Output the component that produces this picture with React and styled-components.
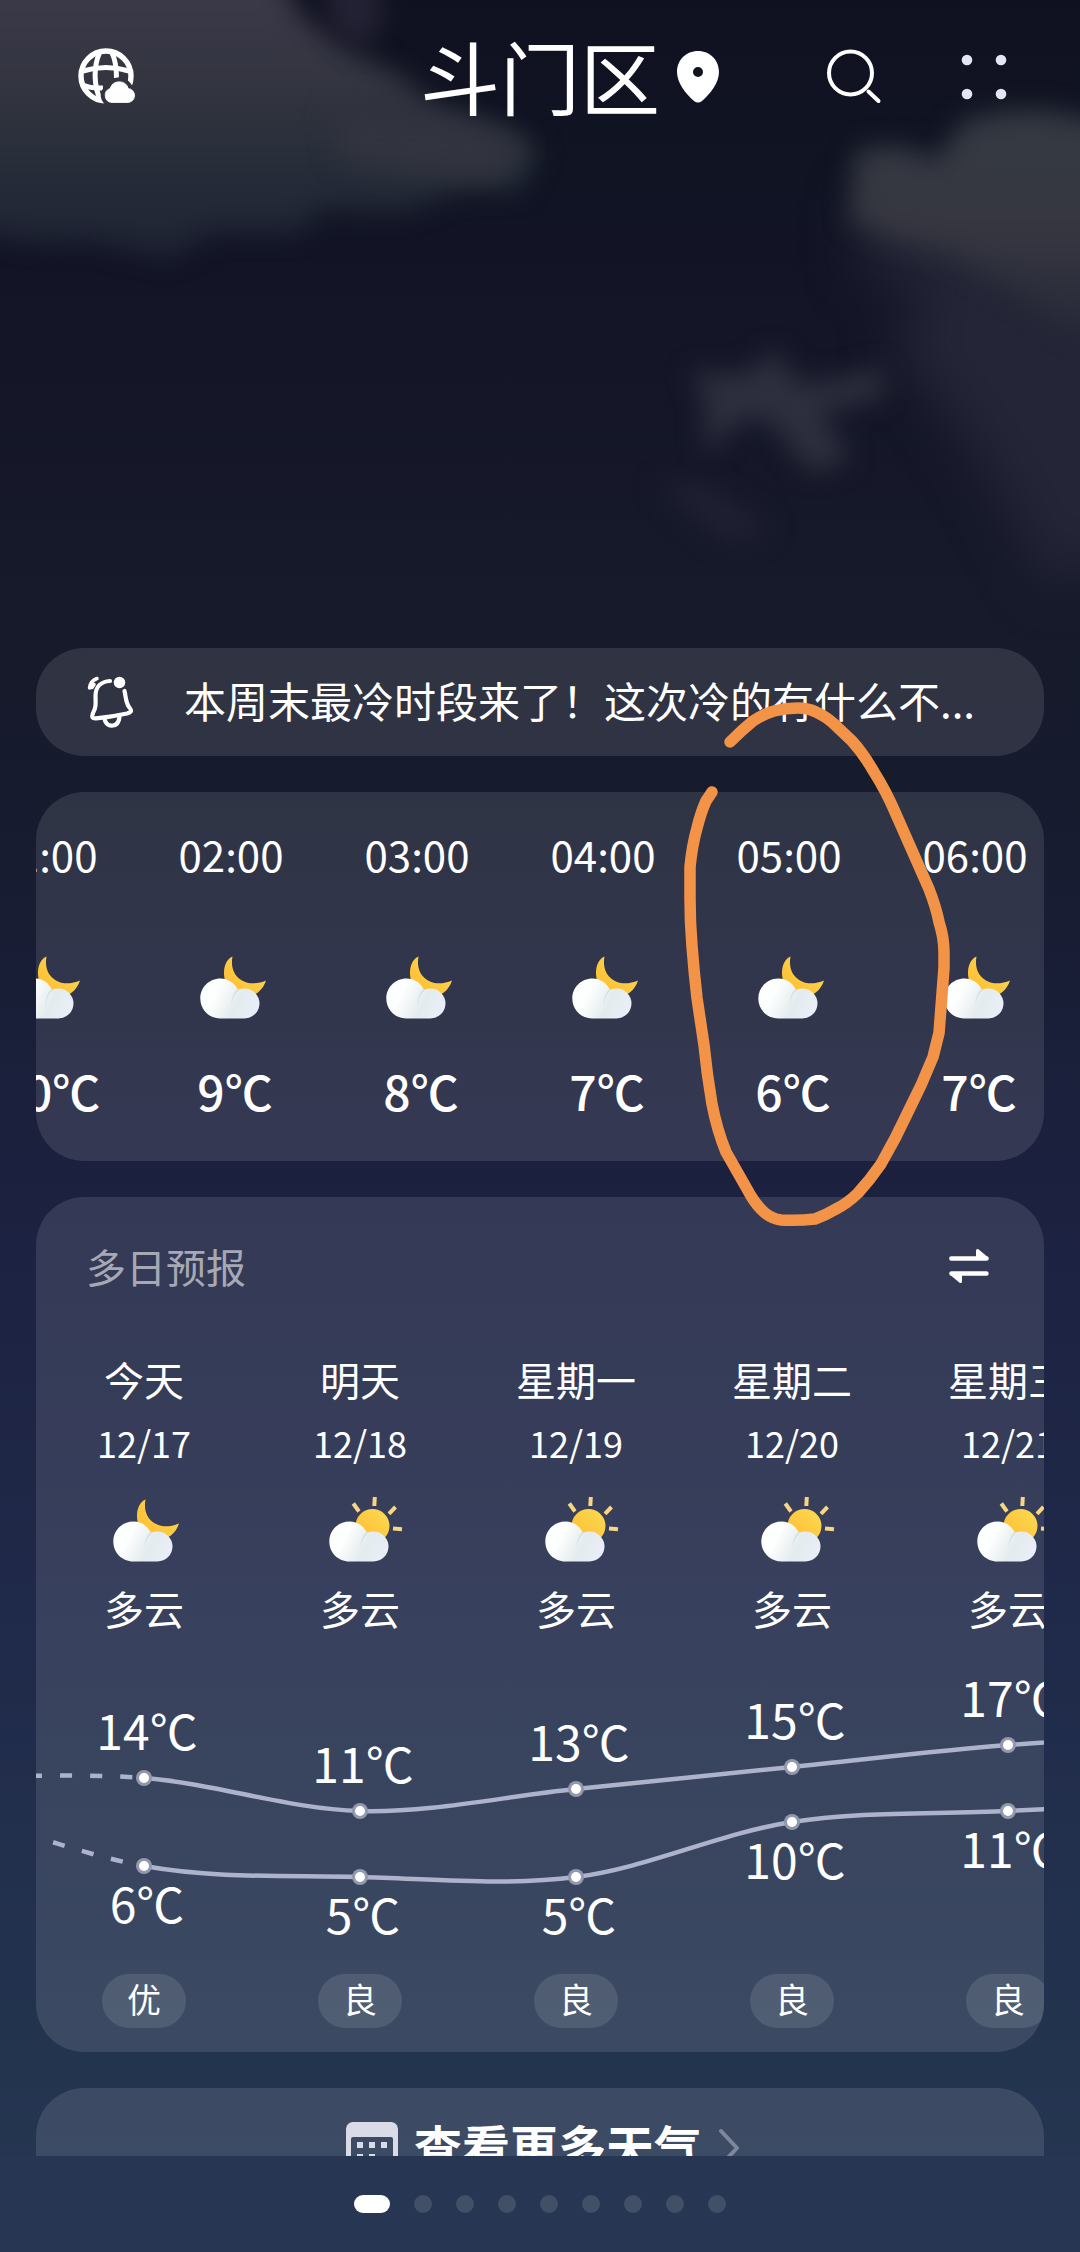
import { useId } from "react"
import styled, { createGlobalStyle } from "styled-components"

const theme = {
    font: `"Noto Sans CJK SC", "Noto Sans", sans-serif`,
    color: {
        text: "#fff",
        muted: "rgba(255, 255, 255, .58)",
        card: "rgba(255, 255, 255, .11)",
        line: "#adb3cb",
        marker: "#f39348",
        footer: "#273753",
    },
    column: {
        hour: 186,
        day: 216,
    },
}

const GlobalStyle = createGlobalStyle`
    * {
        box-sizing: border-box;
    }

    body {
        margin: 0;
        background: #101120;
        color: ${ theme.color.text };
        font-family: ${ theme.font };
    }

    h1, h2, p {
        margin: 0;
        font-weight: 400;
    }
`

/* ---------- data ---------- */

const hours = [
    { time: "01:00", temp: 10 },
    { time: "02:00", temp: 9 },
    { time: "03:00", temp: 8 },
    { time: "04:00", temp: 7 },
    { time: "05:00", temp: 6 },
    { time: "06:00", temp: 7 },
]

const days = [
    { name: "今天", date: "12/17", sky: "night", text: "多云", high: 14, low: 6, air: "优" },
    { name: "明天", date: "12/18", sky: "day", text: "多云", high: 11, low: 5, air: "良" },
    { name: "星期一", date: "12/19", sky: "day", text: "多云", high: 13, low: 5, air: "良" },
    { name: "星期二", date: "12/20", sky: "day", text: "多云", high: 15, low: 10, air: "良" },
    { name: "星期三", date: "12/21", sky: "day", text: "多云", high: 17, low: 11, air: "良" },
]

// neighbours outside the visible range, they only shape the curves
const before = { high: 14, low: 12 }
const after = { high: 18, low: 12 }

const cities = ["斗门区", "2", "3", "4", "5", "6", "7", "8", "9"]

/* ---------- layout ---------- */

const Page = styled.div`
    position: relative;
    display: flex;
    flex-direction: column;
    height: 100vh;
    overflow: hidden;
    background: linear-gradient(#101120 0%, #101423 7%, #141527 14%, #161a2a 28%, #161b2e 35%, #1c2140 53%, #202a4a 73%, #23344f 91%, #273753 100%);
`

const Sky = styled.svg`
    position: absolute;
    top: 0;
    left: 0;
    width: 100%;
    pointer-events: none;
`

const Header = styled.header`
    position: relative;
    flex: none;
    display: grid;
    grid-template-columns: 1fr auto 1fr;
    align-items: center;
    height: 152px;
    padding: 0 72px;
`

const HeaderSide = styled.div`
    display: flex;
    align-items: center;
    gap: 78px;
`

const City = styled.h1`
    font-size: 80px;
    line-height: 96px;
    padding-bottom: 4px;
`

const Pin = styled.svg`
    margin-left: 16px;
    margin-right: auto;
`

const IconButton = styled.button`
    display: flex;
    padding: 0;
    border: 0;
    background: none;
    color: inherit;
    cursor: pointer;
`

const Content = styled.main`
    position: relative;
    flex: 1;
    min-height: 0;
    overflow: hidden;
    display: flex;
    flex-direction: column;
    gap: 36px;
    padding: 496px 36px 0;
`

const Card = styled.section`
    flex: none;
    border-radius: 48px;
    background: ${ theme.color.card };
    overflow: hidden;
`

const Notice = styled.a`
    flex: none;
    display: flex;
    align-items: center;
    gap: 50px;
    height: 108px;
    padding: 0 60px 0 50px;
    border-radius: 48px;
    background: ${ theme.color.card };
    color: inherit;
    text-decoration: none;
`

const NoticeText = styled.span`
    padding-bottom: 4px;
    font-size: 42px;
    line-height: 56px;
    white-space: nowrap;
`

/* ---------- hourly ---------- */

const HourCard = styled(Card)`
    padding: 38px 0 41px;
`

const HourStrip = styled.div`
    display: flex;
    margin-left: -84px;
`

const Hour = styled.div`
    flex: 0 0 ${ theme.column.hour }px;
    display: flex;
    flex-direction: column;
    align-items: center;
`

const HourTime = styled.span`
    font-size: 42px;
    line-height: 48px;
    margin-bottom: 73px;
`

const HourTemp = styled.span`
    padding-left: 8px;
    font-size: 48px;
    font-weight: 500;
    line-height: 60px;
    margin-top: 37px;
`

/* ---------- daily ---------- */

const DayCard = styled(Card)`
    padding: 45px 0 24px;
`

const CardHeader = styled.div`
    display: flex;
    align-items: center;
    justify-content: space-between;
    padding: 0 55px 0 50px;
    margin-bottom: 65px;
`

const CardTitle = styled.h2`
    font-size: 40px;
    line-height: 48px;
    color: ${ theme.color.muted };
`

const DayStrip = styled.div`
    display: flex;
`

const Day = styled.div`
    flex: 0 0 ${ theme.column.day }px;
    display: flex;
    flex-direction: column;
    align-items: center;
`

const DayText = styled.span`
    font-size: 40px;
    line-height: 48px;
`

const DayDate = styled.span`
    font-size: 36px;
    line-height: 44px;
    margin: 17px 0 30px;
`

const SkyText = styled(DayText)`
    margin-top: 18px;
`

const ChartSvg = styled.svg`
    display: block;
    font-size: 48px;
`

const Air = styled.span`
    width: 84px;
    height: 54px;
    border-radius: 27px;
    background: ${ theme.color.card };
    font-size: 34px;
    line-height: 50px;
    text-align: center;
`

/* ---------- bottom ---------- */

const MoreLink = styled.a`
    flex: none;
    display: flex;
    align-items: center;
    justify-content: center;
    height: 120px;
    padding-left: 6px;
    border-radius: 48px;
    background: ${ theme.color.card };
    color: inherit;
    font-size: 48px;
    font-weight: 700;
    line-height: 60px;
    text-decoration: none;
`

const MoreText = styled.span`
    margin: 0 16px 6px 16px;
`

const Pager = styled.nav`
    position: relative;
    flex: none;
    display: flex;
    justify-content: center;
    align-items: center;
    gap: 24px;
    height: 96px;
    background: ${ theme.color.footer };
`

const PagerDot = styled.button`
    width: ${ props => props.$active ? 36 : 18 }px;
    height: 18px;
    padding: 0;
    border: 0;
    border-radius: 9px;
    background: ${ props => props.$active ? "#fff" : "rgba(255, 255, 255, .12)" };
`

const Marker = styled.svg`
    position: absolute;
    top: 0;
    left: 0;
    pointer-events: none;
`

/* ---------- icons ---------- */

function GlobeIcon() {
    const cloud = "M33.500 54.500h15.500a7 7 0 0 0 1.200-14a9.400 9.400 0 0 0-18 0A7.200 7.200 0 0 0 33.500 54.500z"

    return (
        <svg width="69" height="57" viewBox="-6 0 69 57" fill="none" aria-hidden="true">
            <mask id="globe-cut">
                <rect x="-6" width="69" height="57" fill="#fff" />
                <path d={cloud} fill="#000" stroke="#000" strokeWidth="9" strokeLinejoin="round" />
            </mask>
            <g mask="url(#globe-cut)" stroke="#fff" strokeWidth="5">
                <circle cx="28" cy="28" r="25" strokeWidth="5.400" />
                <path d="M5 23Q28 16 51 23M5 37Q13 40.500 25 40" />
                <path d="M21.500 5C15.500 18 15.500 38 22.500 52M34 5C37.500 12 38.500 20 38.500 30" />
            </g>
            <path d={cloud} fill="#fff" stroke="#fff" strokeWidth=".8" />
        </svg>
    )
}

function SearchIcon() {
    return (
        <svg width="57" height="57" viewBox="0 0 57 57" fill="none" stroke="#fff" strokeWidth="4" strokeLinecap="round" aria-hidden="true">
            <circle cx="25.500" cy="25" r="21.500" />
            <path d="M43.500 43.500L53.500 53" />
        </svg>
    )
}

function DotsIcon() {
    return (
        <svg width="48" height="48" viewBox="0 0 48 48" fill="#e4e4f2" aria-hidden="true">
            <circle cx="7" cy="8" r="5.300" />
            <circle cx="41" cy="8" r="5.300" />
            <circle cx="7" cy="42" r="5.300" />
            <circle cx="41" cy="42" r="5.300" />
        </svg>
    )
}

function BellIcon() {
    return (
        <svg width="48" height="54" viewBox="0 0 48 54" fill="none" stroke="#fff" strokeWidth="4.200" strokeLinecap="round" strokeLinejoin="round" aria-hidden="true">
            <path d="M24 6C15 6.500 9.500 12 9.500 21C9.800 29 10 33 7 38C5.500 42 6 43.500 10 43.300C20 42.500 32 40.500 41 38.500C46 37 46 35.500 43 32C39.500 27 40 22 38.500 16" />
            <path d="M18.500 44C20 50 24 51 27 50.500C31 50 33 47 33.500 42" />
            <path d="M11 3.500C7 5 4 8.500 3.500 13M8 9.500L6 12.500" strokeWidth="3.500" />
            <circle cx="33.500" cy="7.500" r="5.800" fill="#fff" stroke="none" />
        </svg>
    )
}

function SwapIcon() {
    return (
        <svg width="40" height="36" viewBox="0 0 40 36" fill="#fff" stroke="#fff" strokeLinejoin="round" strokeLinecap="round" aria-hidden="true">
            <path d="M2.300 10.500H37.500M2.500 25.500H37.500" strokeWidth="4.400" />
            <path d="M28.500 2.500L38 10.500H28.500z M11.500 33.500L2 25.500H11.500z" strokeWidth="3" />
        </svg>
    )
}

function CalendarIcon() {
    return (
        <svg width="52" height="52" viewBox="0 0 52 52" fill="#d9dce6" aria-hidden="true">
            <path fillRule="evenodd" d="M7 0H45A7 7 0 0 1 52 7V45A7 7 0 0 1 45 52H7A7 7 0 0 1 0 45V7A7 7 0 0 1 7 0zM5 17V47H47V17A2 2 0 0 0 45 15H7A2 2 0 0 0 5 17z" />
            <path d="M11 20h6v6h-6zM23 20h6v6h-6zM35 20h6v6h-6zM11 32h6v6h-6zM23 32h6v6h-6z" />
        </svg>
    )
}

function WeatherIcon({ sky }) {
    const id = useId()

    return (
        <svg width="96" height="72" viewBox="0 0 96 72" role="img" aria-label="多云">
            <defs>
                <linearGradient id={id + "sun"} x1="0" y1="1" x2="1" y2="0">
                    <stop offset="0" stopColor="#ffb92e" />
                    <stop offset="1" stopColor="#fbdc55" />
                </linearGradient>
                <linearGradient id={id + "cloud"} gradientUnits="userSpaceOnUse" x1="24" y1="38" x2="72" y2="62">
                    <stop offset=".2" stopColor="#fdfefe" />
                    <stop offset=".62" stopColor="#e3ebee" />
                    <stop offset="1" stopColor="#e9eff8" />
                </linearGradient>
                <linearGradient id={id + "fold"} gradientUnits="userSpaceOnUse" x1="56" y1="38" x2="48" y2="58">
                    <stop offset="0" stopColor="#cfdcdf" />
                    <stop offset="1" stopColor="#cfdcdf" stopOpacity="0" />
                </linearGradient>
            </defs>
            {
                sky === "night"
                    ? <path fill={`url(#${id}sun)`} d="M49.500 5.500C47.500 16 51 25 59 29.500C66 33.500 75 33 83 29.500C80 39 72 46 62 46C50 46 41 35 41 22C41 14 44 8 49.500 5.500z" />
                    : <>
                        <circle cx="60.500" cy="32" r="17" fill={`url(#${id}sun)`} />
                        <path stroke="#f7d683" strokeWidth="4" d="M62.800 3L62.300 12M41.300 9.500L47 17.500M83.500 13L77 19.800M81 34.500L90 35.300" />
                    </>
            }
            <path fill={`url(#${id}cloud)`} d="M37.500 27.500C45 27.500 51.500 31.500 55 38.800Q58 37.500 61.500 37.500A15 15 0 0 1 61.500 67.500H37.500C26 67.500 17.300 58.500 17.300 47.500S26 27.500 37.500 27.500z" />
            <path stroke={`url(#${id}fold)`} strokeWidth="1.500" fill="none" d="M55 38.800C51 42 49 47 48.500 54" />
        </svg>
    )
}

/* ---------- temperature chart ---------- */

const chartHeight = 342
const toX = index => theme.column.day / 2 + index * theme.column.day
const toY = temp => 113 + (17 - temp) * 11

function segments(key) {
    const points = [before, ...days, after].map((day, i) => ({ x: toX(i - 1), y: toY(day[key]) }))

    return points.slice(0, -1).map((p, i) => {
        const prev = points[i - 1] || p
        const next = points[i + 1]
        const last = points[i + 2] || next

        return {
            from: p,
            c1: { x: p.x + (next.x - prev.x) / 6, y: p.y + (next.y - prev.y) / 6 },
            c2: { x: next.x - (last.x - p.x) / 6, y: next.y - (last.y - p.y) / 6 },
            to: next,
        }
    })
}

function Curve({ name, dash }) {
    const [past, ...rest] = segments(name)
    const line = rest.map(s => `C${s.c1.x} ${s.c1.y} ${s.c2.x} ${s.c2.y} ${s.to.x} ${s.to.y}`).join("")

    return (
        <g fill="none" stroke={theme.color.line} strokeWidth="4.500">
            <path
                strokeDasharray={dash}
                d={`M${past.to.x} ${past.to.y}C${past.c2.x} ${past.c2.y} ${past.c1.x} ${past.c1.y} ${past.from.x} ${past.from.y}`}
            />
            <path d={`M${rest[0].from.x} ${rest[0].from.y}${line}`} />
            {
                rest.map(s => (
                    <g key={s.from.x} stroke="none">
                        <circle cx={s.from.x} cy={s.from.y} r="8" fill="#9299ae" />
                        <circle cx={s.from.x} cy={s.from.y} r="5" fill="#fff" />
                    </g>
                ))
            }
        </g>
    )
}

function Chart() {
    const width = days.length * theme.column.day

    return (
        <ChartSvg width={width} height={chartHeight} viewBox={`0 0 ${width} ${chartHeight}`}>
            <Curve name="high" dash="0 12 12 18 12 18 12 18 12 18" />
            <Curve name="low" dash="0 22 12 18 12 18 12 100" />
            <g fill="#fff" textAnchor="middle">
                {
                    days.map((day, i) => (
                        <g key={day.date}>
                            <text x={toX(i) + 3} y={toY(day.high) - 28}>{ day.high }℃</text>
                            <text x={toX(i) + 3} y={toY(day.low) + 57}>{ day.low }℃</text>
                        </g>
                    ))
                }
            </g>
        </ChartSvg>
    )
}

/* ---------- sky ---------- */

function NightSky() {
    return (
        <Sky viewBox="0 0 1080 640" aria-hidden="true">
            <defs>
                <filter id="soft" x="-30%" y="-30%" width="160%" height="160%" colorInterpolationFilters="sRGB">
                    <feGaussianBlur stdDeviation="13" />
                </filter>
                <filter id="softer" x="-40%" y="-40%" width="180%" height="180%" colorInterpolationFilters="sRGB">
                    <feGaussianBlur stdDeviation="26" />
                </filter>
                <linearGradient id="left-cloud" gradientUnits="userSpaceOnUse" x1="0" y1="0" x2="0" y2="270">
                    <stop offset="0" stopColor="#3a3948" />
                    <stop offset=".35" stopColor="#32343f" />
                    <stop offset=".6" stopColor="#262d39" />
                    <stop offset="1" stopColor="#1e2233" />
                </linearGradient>
                <linearGradient id="right-cloud" gradientUnits="userSpaceOnUse" x1="0" y1="100" x2="0" y2="340">
                    <stop offset="0" stopColor="#343a43" />
                    <stop offset=".5" stopColor="#363740" />
                    <stop offset="1" stopColor="#272939" />
                </linearGradient>
            </defs>
            <path filter="url(#soft)" fill="url(#left-cloud)" d="M-60-60H265L300 15L350 50L400 75L440 110L500 125L540 150L520 190L460 190L400 212L320 208L300 232L210 232L170 258L90 240L40 242L-60 225z" />
            <path filter="url(#soft)" fill="#32343f" d="M330 110L450 115L525 145L500 178L420 175L340 160z" />
            <path filter="url(#soft)" fill="#242335" d="M325-30H370L385 20L360 50L330 25z" />
            <path filter="url(#softer)" fill="#242536" d="M860 200L1160 180V540L1050 590L985 470L930 390L890 350L930 290L860 270z" />
            <path filter="url(#soft)" fill="url(#right-cloud)" d="M855 150L900 145L935 160L965 120L1000 112L1040 110L1160 130V330L1070 330L1020 295L950 255L880 235L850 220z" />
            <path filter="url(#soft)" fill="#2e2f3e" d="M690 372L745 375L775 350L800 385L860 375L885 365L880 400L820 410L850 460L810 472L770 420L740 420L705 455L705 400z" />
            <path filter="url(#soft)" fill="#1f2032" d="M655 485L700 480L770 525L750 545L720 540z" />
        </Sky>
    )
}

// hand-drawn loop round the coldest hour
function HandMark() {
    return (
        <Marker width="1080" height="1300" viewBox="0 0 1080 1300" fill="none" aria-hidden="true">
            <path
                stroke={theme.color.marker}
                strokeWidth="11.500"
                strokeLinecap="round"
                strokeLinejoin="round"
                d="M730 742Q742 730 753 721Q764 714 774 711Q786 708 798 708Q808 708 816 712Q825 716 833 723L852 741Q863 753 874 772Q886 791 895 812L914 855L929 889Q936 907 939 922Q944 938 944 952V968L939 1033L933 1057Q922 1085 908 1112Q896 1138 881 1164Q870 1180 858 1193Q848 1203 836 1209Q826 1215 815 1219Q798 1221 781 1220Q773 1219 765 1213Q757 1206 751 1196L726 1152Q717 1130 712 1104Q707 1075 704 1045L697 998Q694 972 692 946Q690 922 690 899V867Q692 846 697 828Q701 812 706 801L712 792"
            />
        </Marker>
    )
}

/* ---------- page ---------- */

export default function App() {
    return (
        <Page>
            <GlobalStyle />
            <NightSky />
            <Header>
                <HeaderSide>
                    <IconButton aria-label="全球天气"><GlobeIcon /></IconButton>
                </HeaderSide>
                <City>斗门区</City>
                <HeaderSide>
                    <Pin width="44" height="54" viewBox="0 0 44 54" fill="#fff" aria-hidden="true">
                        <path fillRule="evenodd" d="M22 2C34 2 43 11 43 23C43 34 34 45 26 52Q22 55 18 52C10 45 1 34 1 23C1 11 10 2 22 2zM22 18A5 5 0 1 0 22 28A5 5 0 1 0 22 18z" />
                    </Pin>
                    <IconButton aria-label="搜索"><SearchIcon /></IconButton>
                    <IconButton aria-label="更多"><DotsIcon /></IconButton>
                </HeaderSide>
            </Header>

            <Content>
                <Notice href="#notice">
                    <BellIcon />
                    <NoticeText>本周末最冷时段来了！这次冷的有什么不...</NoticeText>
                </Notice>

                <HourCard>
                    <HourStrip>
                        {
                            hours.map(hour => (
                                <Hour key={hour.time}>
                                    <HourTime>{ hour.time }</HourTime>
                                    <WeatherIcon sky="night" />
                                    <HourTemp>{ hour.temp }℃</HourTemp>
                                </Hour>
                            ))
                        }
                    </HourStrip>
                </HourCard>

                <DayCard>
                    <CardHeader>
                        <CardTitle>多日预报</CardTitle>
                        <IconButton aria-label="切换"><SwapIcon /></IconButton>
                    </CardHeader>
                    <DayStrip>
                        {
                            days.map(day => (
                                <Day key={day.date}>
                                    <DayText>{ day.name }</DayText>
                                    <DayDate>{ day.date }</DayDate>
                                    <WeatherIcon sky={day.sky} />
                                    <SkyText>{ day.text }</SkyText>
                                </Day>
                            ))
                        }
                    </DayStrip>
                    <Chart />
                    <DayStrip>
                        { days.map(day => <Day key={day.date}><Air>{ day.air }</Air></Day>) }
                    </DayStrip>
                </DayCard>

                <MoreLink href="#more">
                    <CalendarIcon />
                    <MoreText>查看更多天气</MoreText>
                    <svg width="22" height="40" viewBox="0 0 22 40" fill="none" stroke="#7d879c" strokeWidth="4" strokeLinecap="round" strokeLinejoin="round" aria-hidden="true">
                        <path d="M3 3L19 20L3 37" />
                    </svg>
                </MoreLink>
            </Content>

            <Pager aria-label="城市">
                { cities.map((city, index) => <PagerDot key={city} $active={index === 0} aria-label={city} />) }
            </Pager>

            <HandMark />
        </Page>
    )
}
